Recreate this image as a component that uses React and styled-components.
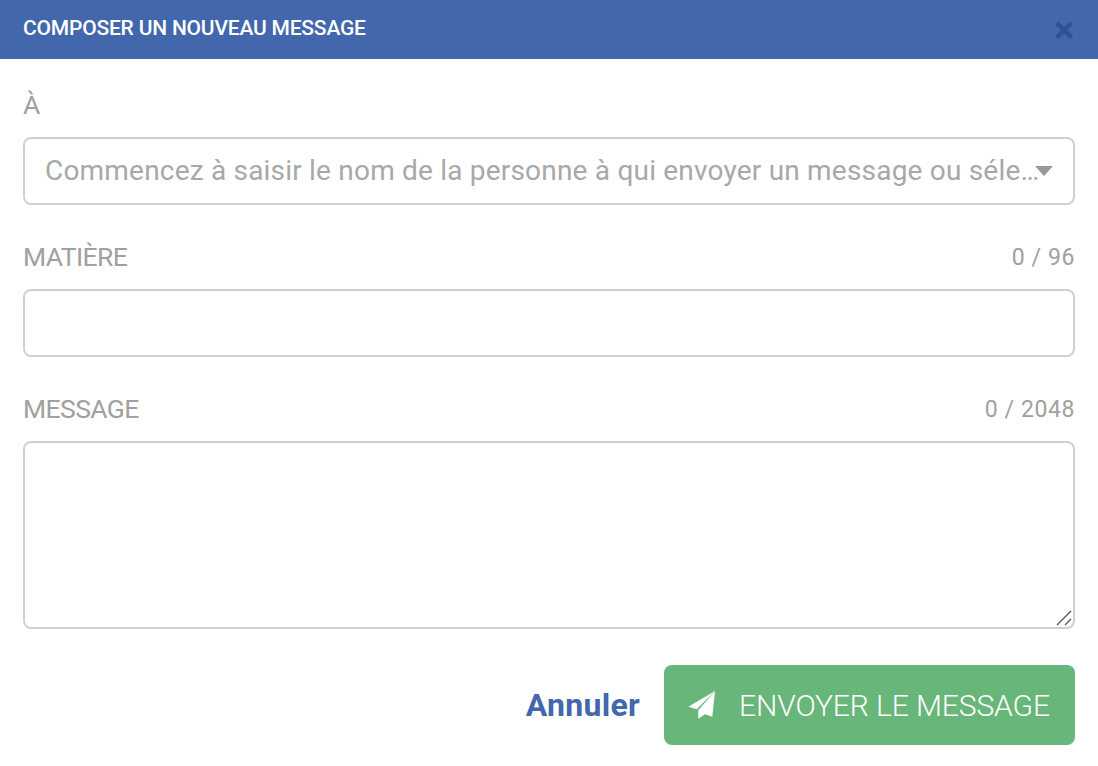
import React from 'react';
import styled, { createGlobalStyle } from 'styled-components';
import { FaTimes } from 'react-icons/fa';

const FONT = 'Roboto, "Noto Sans", sans-serif';

const GlobalStyle = createGlobalStyle`
  html, body {
    margin: 0;
    background: #fff;
    font-family: ${FONT};
  }
  * {
    box-sizing: border-box;
  }
`;

const Modal = styled.div`
  width: 1098px;
  height: 766px;
  overflow: hidden;
  background: #fff;
`;

const Header = styled.div`
  display: flex;
  height: 59px;
  align-items: center;
  justify-content: space-between;
  padding: 0 22px 3px 23px;
  background: #4267ac;
`;

const Title = styled.h2`
  margin: 0;
  color: #fff;
  font-size: 21px;
  font-weight: 500;
  letter-spacing: -0.2px;
`;

const Close = styled.button`
  display: flex;
  padding: 0;
  border: none;
  background: none;
  color: #2f5290;
  font-size: 24.5px;
  margin-top: 4px;
`;

const Form = styled.form`
  display: flex;
  flex-direction: column;
  padding: 28px 23px 0;
`;

const Field = styled.div`
  display: flex;
  flex-direction: column;
  gap: 17px;
  margin-bottom: 34px;
`;

const LabelRow = styled.div`
  display: flex;
  height: 33px;
  padding-top: 2px;
  align-items: center;
  justify-content: space-between;
`;

const Label = styled.label`
  color: #a0a0a0;
  font-size: 26.5px;
  letter-spacing: -0.6px;
`;

const Count = styled.span`
  margin-top: 2px;
  color: #a0a0a0;
  font-size: 23px;
  letter-spacing: 0.6px;
`;

const SelectWrap = styled.div`
  position: relative;
`;

const Input = styled.input`
  display: block;
  width: 100%;
  height: 68px;
  padding: 0 ${(p) => (p.$select ? '30px' : '20px')} 2px 20px;
  border: 2px solid #d0d0d0;
  border-radius: 8px;
  outline: none;
  background: #fff;
  color: #555;
  font-family: ${FONT};
  font-size: 28px;
  letter-spacing: 0.2px;
  text-overflow: ellipsis;

  &::placeholder {
    color: #a8a8a8;
    opacity: 1;
  }
`;

const Caret = styled.span`
  position: absolute;
  top: 29px;
  right: 22px;
  width: 0;
  height: 0;
  border-left: 9px solid transparent;
  border-right: 9px solid transparent;
  border-top: 10px solid #999;
`;

const AreaWrap = styled.div`
  position: relative;
  height: 188px;
`;

const TextArea = styled.textarea`
  display: block;
  width: 100%;
  height: 100%;
  padding: 12px 20px;
  border: 2px solid #d0d0d0;
  border-radius: 8px;
  outline: none;
  resize: none;
  font-family: ${FONT};
  font-size: 28px;
`;

const Grip = styled.svg`
  position: absolute;
  right: 3px;
  bottom: 3px;
  width: 16px;
  height: 16px;
  pointer-events: none;
`;

const Actions = styled.div`
  display: flex;
  align-items: center;
  justify-content: flex-end;
  gap: 24px;
  margin-top: 2px;
`;

const Cancel = styled.a`
  color: #4267ac;
  font-size: 32px;
  font-weight: 700;
  letter-spacing: 0.27px;
`;

const Send = styled.button`
  display: flex;
  width: 411px;
  height: 80px;
  align-items: center;
  gap: 23px;
  padding: 0 24px;
  border: none;
  border-radius: 8px;
  background: #68b67a;
  color: #fff;
  font-family: ${FONT};
  font-size: 30px;
  font-weight: 300;
  letter-spacing: -0.1px;
  white-space: nowrap;
`;

const Plane = styled.svg`
  flex: none;
  width: 28px;
  height: 29px;
  fill: #fff;
`;

export default function App() {
  return (
    <Modal>
      <GlobalStyle />
      <Header>
        <Title>COMPOSER UN NOUVEAU MESSAGE</Title>
        <Close type="button" aria-label="Fermer"><FaTimes /></Close>
      </Header>
      <Form>
        <Field>
          <LabelRow>
            <Label>À</Label>
          </LabelRow>
          <SelectWrap>
            <Input $select placeholder="Commencez à saisir le nom de la personne à qui envoyer un message ou sélectionner" />
            <Caret />
          </SelectWrap>
        </Field>
        <Field>
          <LabelRow>
            <Label>MATIÈRE</Label>
            <Count>0 / 96</Count>
          </LabelRow>
          <Input />
        </Field>
        <Field>
          <LabelRow>
            <Label>MESSAGE</Label>
            <Count>0 / 2048</Count>
          </LabelRow>
          <AreaWrap>
            <TextArea />
            <Grip viewBox="0 0 16 16">
              <path d="M1 15L15 1M9 15L15 9" stroke="#555" strokeWidth="1.3" fill="none" />
            </Grip>
          </AreaWrap>
        </Field>
        <Actions>
          <Cancel>Annuler</Cancel>
          <Send type="button">
            <Plane viewBox="18 15 28 29">
              <path d="M18.3 30.7L45 15L26.7 33.3Z" />
              <path d="M45 15L42.3 40.7L35 38.3L28.3 42.7V34.3Z" />
            </Plane>
            ENVOYER LE MESSAGE
          </Send>
        </Actions>
      </Form>
    </Modal>
  );
}
